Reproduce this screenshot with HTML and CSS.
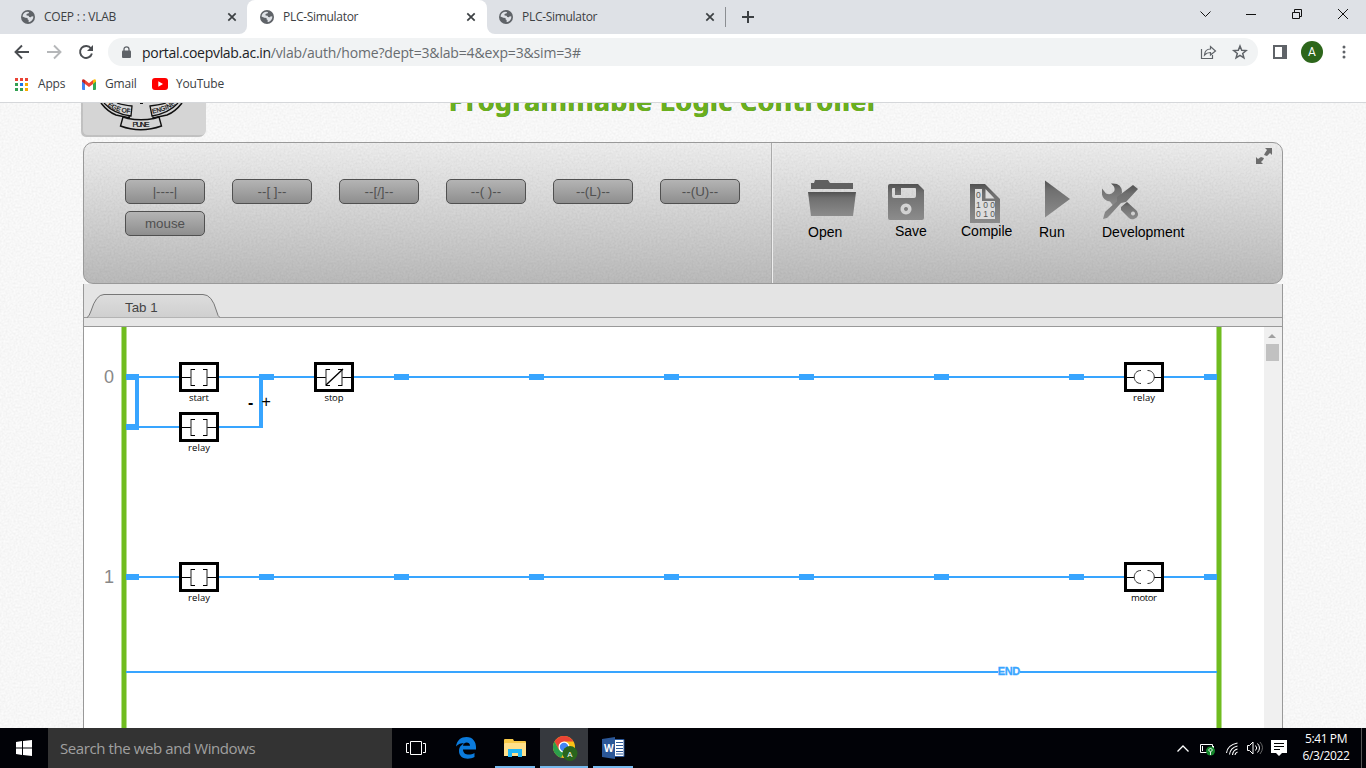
FILE: index.html
```html
<!DOCTYPE html>
<html lang="en">
<head>
<meta charset="utf-8">
<title>PLC-Simulator</title>
<link rel="stylesheet" href="styles.css">
</head>
<body>
<svg class="defs" width="0" height="0" aria-hidden="true">
  <defs>
    <linearGradient id="metal" x1="0" y1="0" x2="0" y2="1"><stop offset="0" stop-color="#525252"/><stop offset=".25" stop-color="#6f6f6f"/><stop offset="1" stop-color="#8c8c8c"/></linearGradient>
    <symbol id="globe" viewBox="0 0 14 14"><circle cx="7" cy="7" r="7" fill="#5f6368"/><path d="M1.500 6.500C1.800 4 3.500 2.200 6 1.800l2 .2-.3 1.300-2.200.7.1 1.600 2 .2.600 1.200 1.600.2 1-.9 1.600.1c0 2.500-1.400 4.600-3.700 5.500l-1.200-.2.2-1.600-1-.5L6.500 8 4.300 7.800z" fill="#dee1e6"/><path d="M2 8.500l2.500.8 1.200 1.400-.2 1.300C3.800 11.500 2.500 10.200 2 8.500z" fill="#5f6368"/></symbol>
    <symbol id="x" viewBox="0 0 10 10"><path d="M1.300 1.300l7.400 7.400M8.700 1.300 1.300 8.700" stroke="#3c4043" stroke-width="1.700"/></symbol>
    <g id="device"><rect x="1.500" y="1.500" width="37" height="27" fill="#fff" stroke="#000" stroke-width="3"/></g>
    <g id="contact"><use href="#device"/><path d="M3 15.500H12M28 15.500H37" stroke="#000"/><path d="M12 7v17M28 7v17" stroke="#444" stroke-width="1.200"/><path d="M12 7.500h4M12 23.500h4M24 7.500h4M24 23.500h4" stroke="#000"/></g>
    <g id="coil"><use href="#device"/><path d="M3 15.500h7M30 15.500h7" stroke="#000"/><path d="M17 8.500c-9 0-9 13 0 13M23.500 8.500c9 0 9 13 0 13" fill="none" stroke="#333"/></g>
    <rect id="node" width="15" height="6" fill="#38a5ff"/>
  </defs>
</svg>
<div class="screen">
  <header class="browser">
    <div class="tabstrip">
      <div class="tab first"><svg class="fav"><use href="#globe"/></svg><span>COEP : : VLAB</span><svg class="close"><use href="#x"/></svg></div>
      <div class="tab active"><svg class="fav"><use href="#globe"/></svg><span>PLC-Simulator</span><svg class="close"><use href="#x"/></svg></div>
      <div class="tab last"><svg class="fav"><use href="#globe"/></svg><span>PLC-Simulator</span><svg class="close"><use href="#x"/></svg></div>
      <svg class="newtab" width="12" height="12"><path d="M6 0v12M0 6h12" stroke="#3c4043" stroke-width="2"/></svg>
      <svg class="window" width="150" height="14" viewBox="1199 8 150 14" fill="none" stroke="#111"><path d="M1200.500 11.500l5 5 5-5"/><path d="M1246 14.500h10"/><path d="M1292.500 12.500h7v6h-7zM1294.500 12v-2.500h7v7H1300"/><path d="M1338 9l10 10M1348 9l-10 10"/></svg>
    </div>
    <div class="navbar">
      <svg width="86" height="20" viewBox="12 42 86 20" fill="none" stroke="#4a4d51" stroke-width="1.900"><path d="M29 52H16M22 45.500 15.500 52l6.500 6.500"/><path d="M47 52h13M54 45.500l6.500 6.500-6.500 6.500" stroke="#b5b7b9"/><path d="M91 48.500a6 6 0 1 0 .9 5"/><path d="M93 45v6h-6z" fill="#4a4d51" stroke="none"/></svg>
      <div class="omnibox">
        <svg class="lock" width="9" height="12"><path d="M2 5V3.300a2.500 2.500 0 0 1 5 0V5" fill="none" stroke="#5f6368" stroke-width="1.300"/><rect y="4.500" width="9" height="7.500" rx="1" fill="#5f6368"/></svg>
        <span class="url"><b>portal.coepvlab.ac.in</b>/vlab/auth/home?dept=3&amp;lab=4&amp;exp=3&amp;sim=3#</span>
        <svg class="boxicons" width="48" height="18" viewBox="1200 43 48 18" fill="none" stroke="#5f6368" stroke-width="1.200"><path d="M1201.500 49v9.500h11V55M1204.500 55c.3-4 2.500-6 6-6v-2.500l5 4.500-5 4v-2.500c-2.500 0-4.300.6-6 2.500z"/><path d="M1240 46l1.700 4.300 4.500.3-3.500 2.900 1.200 4.400-3.900-2.500-3.900 2.500 1.200-4.400-3.500-2.900 4.500-.3z" stroke-width="1.500"/></svg>
      </div>
      <svg class="side" width="14" height="14"><path d="M1 1h12v12H1z" fill="#fff" stroke="#5f6368" stroke-width="2"/><path d="M9 0h5v14H9z" fill="#5f6368"/></svg>
      <span class="avatar">A</span>
      <svg width="4" height="14" fill="#5f6368"><circle cx="2" cy="2" r="1.500"/><circle cx="2" cy="7" r="1.500"/><circle cx="2" cy="12" r="1.500"/></svg>
    </div>
    <div class="bookmarks">
      <svg width="13" height="13"><path d="M0 0h3v3H0zM5 0h3v3H5zM10 0h3v3h-3z" fill="#ea4335"/><path d="M0 5h3v3H0zM0 10h3v3H0zM5 10h3v3H5z" fill="#34a053"/><path d="M5 5h3v3H5z" fill="#1a73e8"/><path d="M10 5h3v3h-3zM10 10h3v3h-3z" fill="#f9ab00"/></svg>
      <span class="apps">Apps</span>
      <svg width="14" height="11"><path d="M0 1.500 3 4v7H1a1 1 0 0 1-1-1z" fill="#4285f4"/><path d="M14 1.500 11 4v7h2a1 1 0 0 0 1-1z" fill="#34a853"/><path d="M3 1l4 3.200L11 1v4L7 8 3 5z" fill="#ea4335"/><path d="M0 2.500V1.500Q.5-.5 3 1v4z" fill="#c5221f"/><path d="M14 2.500V1.500Q13.500-.5 11 1v4z" fill="#fbbc04"/></svg>
      <span class="gmail">Gmail</span>
      <svg width="16" height="12"><rect width="16" height="12" rx="3" fill="#f00"/><path d="M6.300 3.300v5.400L11 6z" fill="#fff"/></svg>
      <span class="youtube">YouTube</span>
    </div>
  </header>

  <main class="page">
    <div class="sim">
      <svg class="masthead" width="1206" height="39" viewBox="77 103 1206 39">
        <path d="M81 103h124v27q0 7-6 7H87q-6 0-6-6z" fill="#aaa" opacity=".7"/><path d="M83 103h123v27q0 5-5 5H88q-5 0-5-5z" fill="#d5d5d5"/>
        <g fill="none" stroke="#111">
          <path d="M101 103q7 9 15 12l14 3M182 103q-7 9-15 12l-14 3" stroke-width="1.600"/>
          <path d="M104 103q10 11 27 13l1-10q-10-1-15-3M178 103q-9 10-26 13l-2-10q10-1 16-3M129 116v2M153 116v2" stroke-width="1.300"/>
          <path d="M123 117l-2.500 9q20 7.500 41 0l-2.500-9-5 1.500q-13 2.500-26 0z" stroke-width="1.400"/>
          <path id="ribbonL" d="M107.500 105.500q9 7 24 8" stroke="none"/><path id="ribbonR" d="M152.500 113.500q13-2 23-9" stroke="none"/>
          <path d="M140 103.500h3" stroke-width="1"/>
        </g>
        <g class="crest"><text x="132.500" y="127" textLength="17">PUNE</text><text class="small"><textPath href="#ribbonL">EGE OF</textPath></text><text class="small"><textPath href="#ribbonR">ENGINE</textPath></text></g>
        <text class="title shade" x="449" y="110.500" textLength="430">Programmable Logic Controller</text>
        <text class="title" x="448.500" y="111" textLength="430">Programmable Logic Controller</text>
      </svg>
      <section class="panel">
        <div class="elements">
          <button>|----|</button><button>--[ ]--</button><button>--[/]--</button><button>--( )--</button><button>--(L)--</button><button>--(U)--</button><button>mouse</button>
        </div>
        <div class="tools">
          <div class="tool open"><svg width="48" height="45" viewBox="808 179 48 45" fill="url(#metal)"><path d="M811 188v-5h3l1-3h13l2 3h23v6h-42z" fill="#606060"/><path d="M808 192h48l-3 24h-42z"/></svg><span>Open</span></div>
          <div class="tool save"><svg width="40" height="44" viewBox="888 179 40 44"><path fill="url(#metal)" fill-rule="evenodd" d="M890 184h28l6 6v28q0 2-2 2h-32q-2 0-2-2v-32q0-2 2-2zM892 189q0-1 1-1h2v7h6v-7h14q1 0 1 1v7q0 2-2 2h-20q-2 0-2-2zM906 203.500a5.500 5.500 0 1 0 .01 0zM906 207a2 2 0 1 1-.01 0z"/></svg><span>Save</span></div>
          <div class="tool compile"><svg width="52" height="44" viewBox="961 179 52 44"><path d="M970 184h15l15 15v25h-30z" fill="url(#metal)"/><path d="M985.500 189v9.500h9z" fill="#ddd"/><path d="M975 189h7v12h13v18h-20z" fill="#ddd"/><g class="bits"><text x="976" y="197.500">0</text><text x="976" y="207.500" textLength="19">100</text><text x="976" y="217" textLength="19">010</text></g></svg><span>Compile</span></div>
          <div class="tool run"><svg width="32" height="45" viewBox="1039 179 32 45"><path d="M1045 180.500 1070 199l-25 18.500z" fill="url(#metal)"/></svg><span>Run</span></div>
          <div class="tool dev"><svg width="83" height="45" viewBox="1102 179 83 45" fill="url(#metal)"><path d="M1111 183.500q11-1 11 9-1 5-4 8l-5 5-3-4q-7-1-8-7v-6l4 5q5 2 8-2 2-4-3-8z"/><path d="M1133 185l5 4-12 13-5 1-10 11-4 4-4 1 2-7 12-11v-4z"/><path fill-rule="evenodd" d="M1121 207l6-5 10 9q3 6-3 8-3 1-5-1l-8-8zM1133 211.500a2 2 0 1 0 .01 0z"/></svg><span>Development</span></div>
        </div>
        <svg class="expand" width="16" height="16" fill="#6c6c6c"><path d="M9 0h7v7l-2-2-3 3-3-1 1-2 2-3zM0 9l2 2 3-2 3 1-1 2-2 2 2 2H0z"/></svg>
      </section>
      <div class="filetabs">
        <svg width="133" height="24" viewBox="87 294 133 24"><defs><linearGradient id="tabfill" x1="0" y1="0" x2="0" y2="1"><stop stop-color="#ddd"/><stop offset="1" stop-color="#cfcfcf"/></linearGradient></defs><path d="M87 317.500Q89 317 91 311q5-16.500 13-16.500h99q9 0 13.500 16.500 1.500 6 3.500 6.500" fill="url(#tabfill)" stroke="#777"/><text class="tabname" x="125" y="312">Tab 1</text></svg>
      </div>
      <div class="spacer"></div>
      <div class="workspace">
        <svg class="ladder" width="1180" height="401" viewBox="84 327 1180 401">
          <path d="M124 327v401M1219 327v401" stroke="#b4dc8c" stroke-width="6"/>
          <g fill="none" stroke="#38a5ff" stroke-width="2"><path d="M126 377H1217M126 427H262M126 577H1217M126 672H998M1020 672H1217"/><path d="M137 374v56M261 374v54" stroke-width="4"/></g>
          <path d="M124 327v401M1219 327v401" stroke="#70bc1f" stroke-width="4"/>
          <g id="nodes"><rect x="126" y="374" width="13" height="6"/><rect x="126" y="424" width="13" height="6"/><rect x="126" y="574" width="13" height="6"/><rect x="1204" y="374" width="13" height="6"/><rect x="1204" y="574" width="13" height="6"/></g>
          <use href="#node" x="259" y="374"/><use href="#node" x="394" y="374"/><use href="#node" x="529" y="374"/><use href="#node" x="664" y="374"/><use href="#node" x="799" y="374"/><use href="#node" x="934" y="374"/><use href="#node" x="1069" y="374"/>
          <use href="#node" x="259" y="574"/><use href="#node" x="394" y="574"/><use href="#node" x="529" y="574"/><use href="#node" x="664" y="574"/><use href="#node" x="799" y="574"/><use href="#node" x="934" y="574"/><use href="#node" x="1069" y="574"/>
          <use href="#contact" x="179" y="362"/><use href="#contact" x="179" y="412"/><use href="#contact" x="179" y="562"/><use href="#contact" x="314" y="362"/><path d="M326 385l17-16" stroke="#000" stroke-width="1.300"/>
          <use href="#coil" x="1124" y="362"/><use href="#coil" x="1124" y="562"/>
          <g class="rung"><text x="104" y="383">0</text><text x="104" y="583">1</text></g>
          <g class="name"><text x="199" y="401" textLength="20">start</text><text x="199" y="451" textLength="22">relay</text><text x="334" y="401" textLength="19">stop</text><text x="199" y="601" textLength="22">relay</text><text x="1144" y="401" textLength="22">relay</text><text x="1144" y="601" textLength="26">motor</text></g>
          <text class="minus" x="248" y="408">-</text><text class="plus" x="261.500" y="407">+</text>
          <text class="end" x="992" y="675" textLength="34">–END–</text>
        </svg>
        <div class="scrollbar"><svg width="8" height="4"><path d="M0 4l4-4 4 4z" fill="#a0a0a0"/></svg><div class="thumb"></div></div>
      </div>
    </div>
  </main>

  <footer class="taskbar">
    <div class="start"><svg width="16" height="16" fill="#fff"><path d="M0 2l6-1v6.500H0zM7 1l9-1v7.500H7zM0 8.500h6V15l-6-1zM7 8.500h9V16l-9-1z"/></svg></div>
    <div class="search">Search the web and Windows</div>
    <div class="app view"><svg width="20" height="14" fill="none" stroke="#fff"><path d="M4.500.5h11v13h-11zM3 2.500H.5v9H3M17 2.500h2.500v9H17"/></svg></div>
    <div class="app edge"><svg width="20" height="22" viewBox="0 0 20 22"><path fill="#0b7bdc" d="M0 9.500C1 3 5 0 10.500 0 17 0 20 5 20 10v2.500H7c.2 6 7 6 11.500 3.500V20C13 23 3 22.500 3 14c0-4 2.500-6.500 6-8C5 6 2 7 0 9.500zM7 8.800h7C14 4.500 7.500 4.500 7 8.800z"/></svg></div>
    <div class="app files running"><svg width="22" height="19"><path d="M0 1q0-1 1-1h8l1 2h11q1 0 1 1v14H0z" fill="#f7c948"/><path d="M1 4h21v13H0V5z" fill="#ffe08a"/><path d="M4 18v-8h14v8h-4v-4H8v4z" fill="#20b7f5"/></svg></div>
    <div class="app chrome running"><svg width="25" height="25"><circle cx="11" cy="11" r="11" fill="#fbc116"/><path d="M1.500 5.500A11 11 0 0 1 20.500 5.500H11L6 13.700z" fill="#ea4335"/><path d="M1.500 5.500 6 13.700l5 3-3 5A11 11 0 0 1 1.500 5.500z" fill="#2c9e4b"/><circle cx="11" cy="11" r="5.500" fill="#fff"/><circle cx="11" cy="11" r="4.200" fill="#4285f4"/><circle cx="17" cy="17.500" r="7.500" fill="#29651c"/><text class="badge" x="14.300" y="21">A</text></svg></div>
    <div class="app wordapp running"><svg width="23" height="22"><path d="M12 2.500h10v17H12z" fill="#fff" stroke="#2b5797"/><path d="M14 5.500h7M14 8.500h7M14 11.500h7M14 14.500h7M14 17h7" stroke="#2b5797" stroke-width="1.200"/><path d="M0 2l13-2v22L0 20z" fill="#2b5797"/><text class="w" x="2" y="15">W</text></svg></div>
    <svg class="tray" width="114" height="18" viewBox="1176 739 114 18" fill="none" stroke="#fff"><path d="M1177.500 751.500l5.500-5.500 5.500 5.500" stroke-width="1.300"/><path d="M1200.500 744.500h12v8h-12zM1213.500 746v4M1202.500 746v5"/><circle cx="1210.500" cy="751" r="4.500" fill="#14872b" stroke="none"/><path d="M1210.500 755v-3M1208.500 750l2-2 2 2-2 2z" stroke-width=".9"/><path d="M1226.500 753q1-8 11-10M1229.500 754.500q1-7 8-8.500M1232.500 755q.500-5 5-6M1235 755q0-2 2.500-3" stroke-width="1.100"/><path d="M1247.500 745.500h2l3.500-3.500v12l-3.500-3.500h-2zM1255.500 745.500q2.500 2.500 0 5M1257.500 743.500q4 4.500 0 9"/><path d="M1260 742q5 5.500 0 12" stroke="#666"/><path d="M1271 740h16v13h-5l-3 3-3-3h-5z" fill="#fff" stroke="none"/><path d="M1274 743.500h10M1274 746.500h10M1274 749.500h6" stroke="#000"/></svg>
    <div class="clock"><span>5:41 PM</span><span>6/3/2022</span></div>
    <div class="desktop"></div>
  </footer>
</div>
</body>
</html>
```
FILE: styles.css
```css
* { box-sizing: border-box; }
body { margin: 0; font-family: "Open Sans", sans-serif; }
svg { display: block; flex: none; }
.defs { position: absolute; }
.screen { width: 1366px; height: 768px; display: flex; flex-direction: column; overflow: hidden; white-space: nowrap; }
.browser { height: 103px; flex: none; background: #fff; border-bottom: 1px solid #d5d7da; font-size: 12px; color: #3c4043; }

.tabstrip { height: 34px; display: flex; align-items: center; background: #fff; }
.tab { height: 34px; display: flex; align-items: center; background: #dee1e6; letter-spacing: -0.3px; }
.tab span { margin-left: 9px; flex: 1; padding-bottom: 1px; }
.first { width: 247px; padding: 0 10px 0 21px; border-radius: 0 0 8px 0; }
.first span { letter-spacing: -0.24px; }
.active { width: 240px; padding: 0 11px 0 13px; background: linear-gradient(#dee1e6, #dee1e6) left top / 8px 8px no-repeat, linear-gradient(#dee1e6, #dee1e6) right top / 8px 8px no-repeat; position: relative; z-index: 0; }
.active::before { content: ""; position: absolute; inset: 0; background: #fff; border-radius: 8px 8px 0 0; z-index: -1; }
.last { width: 238px; padding: 0 10px 0 12px; border-radius: 0 0 0 8px; }
.fav { width: 14px; height: 14px; }
.close { width: 10px; height: 10px; }
.tabstrip .newtab { box-sizing: content-box; padding: 11px 16px 11px 17px; background: linear-gradient(#8b8e92, #8b8e92) 0 7px / 1px 20px no-repeat #dee1e6; }
.tabstrip .window { box-sizing: content-box; flex: 1; padding: 8px 17px 12px 429px; min-width: 150px; background: #dee1e6; }

.navbar { height: 36px; display: flex; align-items: center; padding-left: 12px; }
.omnibox { width: 1150px; height: 28px; margin: 0 15px 0 10px; padding: 0 10px 0 14px; border-radius: 14px; background: #f1f3f4; display: flex; align-items: center; }
.url { margin-left: 11px; flex: 1; font-size: 14px; color: #686c70; letter-spacing: -0.16px; }
.url b { font-weight: 400; color: #202124; letter-spacing: -0.3px; }
.avatar { width: 22px; height: 22px; margin: 0 19px 0 14px; border-radius: 50%; background: #2d661b; color: #fff; font: 12px/22px Roboto, sans-serif; text-align: center; }
.bookmarks { height: 28px; display: flex; align-items: center; padding-left: 15px; }
.bookmarks span { letter-spacing: -0.2px; padding-bottom: 1px; }
.apps { margin-left: 10px; width: 44px; }
.gmail { margin-left: 9px; width: 47px; }
.youtube { margin-left: 8px; }

.page { flex: 1; min-height: 0; overflow: hidden; padding-left: 83px; background: url("data:image/svg+xml,%3Csvg xmlns='http://www.w3.org/2000/svg' width='200' height='200'%3E%3Cfilter id='n'%3E%3CfeTurbulence type='fractalNoise' baseFrequency='.5' numOctaves='2' stitchTiles='stitch'/%3E%3CfeColorMatrix values='0 0 0 0 0 0 0 0 0 0 0 0 0 0 0 .07 0 0 0 -.01'/%3E%3C/filter%3E%3Crect width='200' height='200' filter='url(%23n)'/%3E%3C/svg%3E") #fdfdfd; }
.sim { width: 1200px; }
.masthead { margin-left: -6px; }
.title { font: 700 27px "Noto Sans", sans-serif; fill: #6ab01e; }
.shade { fill: #4d7a20; }
.crest { font: 7.5px "Liberation Sans", sans-serif; fill: #111; stroke: #111; stroke-width: .2px; }
.small { font-size: 6.5px; }

.panel { position: relative; height: 142px; display: flex; border: 1px solid #999; border-radius: 10px; background: url("data:image/svg+xml,%3Csvg xmlns='http://www.w3.org/2000/svg' width='200' height='200'%3E%3Cfilter id='n'%3E%3CfeTurbulence type='fractalNoise' baseFrequency='.5' numOctaves='2' stitchTiles='stitch'/%3E%3CfeColorMatrix values='0 0 0 0 0 0 0 0 0 0 0 0 0 0 0 .09 0 0 0 -.02'/%3E%3C/filter%3E%3Crect width='200' height='200' filter='url(%23n)'/%3E%3C/svg%3E"), linear-gradient(#f0f0f0, #bcbcbc); }
.elements { width: 688px; padding: 36px 0 0 41px; display: grid; grid-template-columns: repeat(6, 80px); grid-auto-rows: 25px; gap: 7px 27px; border-right: 1px solid #aaa; box-shadow: 1px 0 #eee; align-content: start; }
button { padding: 0; border: 1px solid #505050; border-radius: 5px; background: linear-gradient(#b4b4b4, #8e8e8e); color: #505050; font: 13.33px "Liberation Sans", sans-serif; }
.tools { display: flex; align-items: flex-start; padding: 36px 0 0 36px; font: 14px/16px "Liberation Sans", sans-serif; color: #000; }
.tool { display: flex; flex-direction: column; }
.open { width: 80px; }
.save { width: 73px; }
.save span { margin-left: 7px; }
.compile { width: 78px; }
.run { width: 63px; }
.bits { font: 8.5px "Liberation Sans", sans-serif; fill: #555; }
.expand { position: absolute; right: 10px; top: 5px; }
.filetabs { height: 34px; padding: 10px 0 0 3px; background: #e4e4e4; border: solid #999; border-width: 0 1px 1px; }
.filetabs svg { margin-bottom: -1px; }
.tabname { font: 13.33px "Liberation Sans", sans-serif; fill: #444; }
.spacer { height: 9px; background: #e6e6e6; border: solid #999; border-width: 0 1px 1px; }
.workspace { height: 401px; display: flex; background: #fff; border: solid #999; border-width: 0 1px; }
#nodes { fill: #38a5ff; }
.rung { font: 18px "Liberation Sans", sans-serif; fill: #888; }
.name { font: 9.5px "Open Sans", sans-serif; fill: #000; text-anchor: middle; }
.minus { font: 700 16px "Liberation Sans", sans-serif; }
.plus { font: 16px "Liberation Sans", sans-serif; }
.end { font: 700 11px "Liberation Sans", sans-serif; fill: #38a5ff; stroke: #38a5ff; stroke-width: .3px; }
.scrollbar { width: 18px; background: #f0f0f0; display: flex; flex-direction: column; align-items: center; padding: 7px 2px 0 0; }
.thumb { width: 13px; height: 17px; margin-top: 6px; background: #c1c1c1; }

.taskbar { height: 40px; flex: none; display: flex; align-items: center; background: #010207; color: #fff; }
.start { width: 48px; padding-left: 16px; }
.search { width: 344px; height: 40px; padding-left: 12px; background: #333; color: #a0a0a0; font-size: 15px; line-height: 40px; letter-spacing: -0.41px; }
.app { height: 40px; display: flex; align-items: center; justify-content: center; }
.view { width: 48px; }
.edge { width: 52px; margin-right: 3px; }
.running { border-bottom: 2px solid #76b9ed; padding-top: 2px; }
.files { width: 40px; margin-right: 5px; }
.chrome { width: 48px; margin-right: 5px; padding-left: 2px; background: #36393e; }
.wordapp { width: 40px; }
.badge { font: 8px Roboto, sans-serif; fill: #fff; }
.w { font: 700 10px "Open Sans", sans-serif; fill: #fff; }
.tray { margin-left: 543px; }
.clock { width: 71px; padding: 0 0 2px 1px; display: flex; flex-direction: column; align-items: center; font-size: 12px; line-height: 17px; letter-spacing: -0.4px; }
.desktop { width: 1px; height: 40px; background: #555; }
```
